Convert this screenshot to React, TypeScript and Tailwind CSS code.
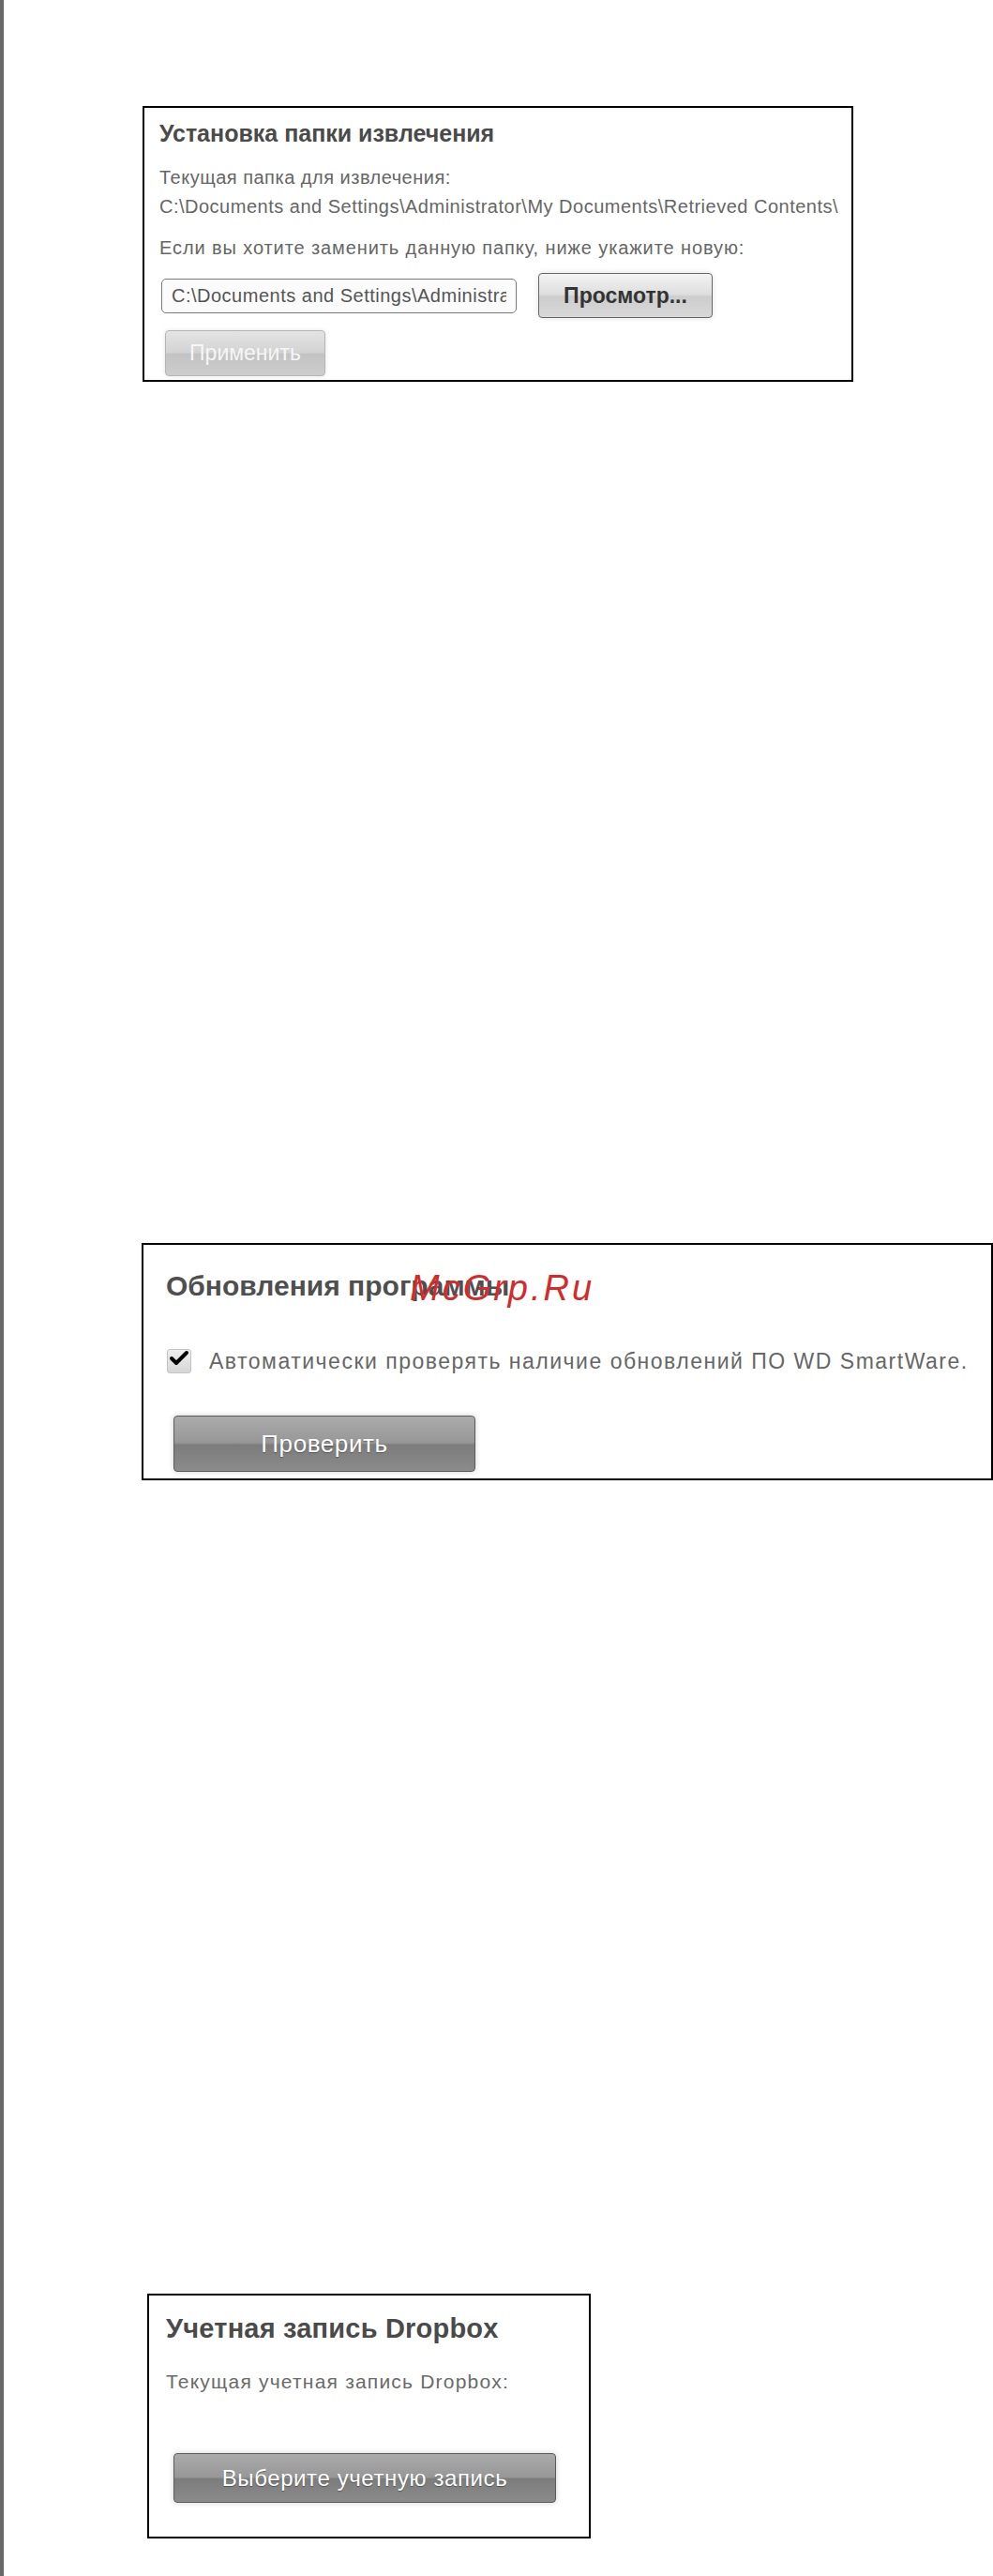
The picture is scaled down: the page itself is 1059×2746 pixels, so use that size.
import { Check } from 'lucide-react';

const font = { fontFamily: '"Liberation Sans", Arial, sans-serif' };

// glossy dark-gray button used by the update and Dropbox panels
const darkButton =
  'flex items-center justify-center rounded-[4px] border border-[#5a5a5a] bg-[linear-gradient(to_bottom,#ababab_0%,#979797_48%,#7c7c7c_52%,#8b8b8b_100%)] text-white [text-shadow:0_1px_1px_rgba(0,0,0,0.35)] shadow-[0_0_6px_rgba(0,0,0,0.18)]';

function ExtractFolderPanel() {
  return (
    <div className="ml-[148px] mt-[113px] h-[294px] w-[758px] border-2 border-black bg-white pl-4 pt-[13px]">
      <h2 className="text-[25px] font-bold leading-[28px] text-[#4a4a4a]">Установка папки извлечения</h2>
      <p className="mt-[22px] text-[20px] leading-[22px] tracking-[0.5px] text-[#666]">
        Текущая папка для извлечения:
      </p>
      <p className="mt-[9px] whitespace-nowrap text-[20px] leading-[22px] tracking-[0.5px] text-[#666]">
        C:\Documents and Settings\Administrator\My Documents\Retrieved Contents\
      </p>
      <p className="mt-[22px] text-[20px] leading-[22px] tracking-[0.9px] text-[#666]">
        Если вы хотите заменить данную папку, ниже укажите новую:
      </p>

      <div className="mt-4 flex items-center gap-[23px]">
        <input
          readOnly
          value="C:\Documents and Settings\Administrator\My Documents\Retrieved Contents\"
          className="ml-[2px] h-[37px] w-[379px] rounded-[5px] border border-[#7a7a7a] bg-[#fbfbfb] px-[10px] text-[20px] tracking-[0.5px] text-[#555] outline-none"
          style={font}
        />
        <button
          className="h-[48px] w-[186px] rounded-[4px] border border-[#666] bg-[linear-gradient(to_bottom,#f3f3f3_0%,#dedede_48%,#cdcdcd_52%,#d8d8d8_100%)] text-[23px] font-bold text-[#333] shadow-[0_0_6px_rgba(0,0,0,0.12)]"
          style={font}
        >
          Просмотр...
        </button>
      </div>

      <button
        disabled
        className="ml-[6px] mt-[13px] h-[49px] w-[171px] rounded-[4px] border border-[#b4b4b4] bg-[linear-gradient(to_bottom,#e4e4e4_0%,#d3d3d3_48%,#c3c3c3_52%,#cdcdcd_100%)] text-[23px] text-[#f6f6f6] shadow-[0_0_5px_rgba(0,0,0,0.1)]"
        style={font}
      >
        Применить
      </button>
    </div>
  );
}

function UpdatesPanel() {
  return (
    <div className="relative ml-[147px] mt-[918px] h-[253px] w-[908px] border-2 border-black bg-white pl-6 pt-[27px]">
      <h2 className="text-[30px] font-bold leading-[34px] text-[#4f4f4f]">Обновления программы</h2>
      {/* site watermark over the heading */}
      <span className="absolute left-[284px] top-[24px] text-[38px] italic leading-[44px] tracking-[3px] text-[#d52a2a]">
        McGrp.Ru
      </span>

      <label className="mt-[50px] flex items-center gap-[19px]">
        <span className="ml-px flex h-[26px] w-[26px] items-center justify-center rounded-[3px] border border-[#c4c4c4] bg-[linear-gradient(to_bottom,#efefef,#d6d6d6)]">
          <Check className="h-[26px] w-[26px] -translate-y-[3px] text-black" strokeWidth={4} />
        </span>
        <span className="whitespace-nowrap text-[23px] leading-[24px] tracking-[1.5px] text-[#666]">
          Автоматически проверять наличие обновлений ПО WD SmartWare.
        </span>
      </label>

      <button className={`ml-2 mt-[45px] h-[60px] w-[322px] text-[26px] tracking-[0.6px] ${darkButton}`} style={font}>
        Проверить
      </button>
    </div>
  );
}

function DropboxPanel() {
  return (
    <div className="ml-[153px] mt-[867px] h-[261px] w-[473px] border-2 border-black bg-white pl-[18px] pt-[19px]">
      <h2 className="text-[29px] font-bold leading-[32px] tracking-[0.2px] text-[#4a4a4a]">Учетная запись Dropbox</h2>
      <p className="mt-[30px] text-[21px] leading-[22px] tracking-[1.2px] text-[#6a6a6a]">
        Текущая учетная запись Dropbox:
      </p>
      <button className={`ml-[8px] mt-[65px] h-[53px] w-[408px] text-[24px] tracking-[0.6px] ${darkButton}`} style={font}>
        Выберите учетную запись
      </button>
    </div>
  );
}

export default function App() {
  return (
    <div className="flex min-h-[2746px] w-[1059px] bg-white" style={font}>
      <div className="w-[4px] shrink-0 bg-[#686868]" />
      <div className="flex flex-col pb-[40px]">
        <ExtractFolderPanel />
        <UpdatesPanel />
        <DropboxPanel />
      </div>
    </div>
  );
}
